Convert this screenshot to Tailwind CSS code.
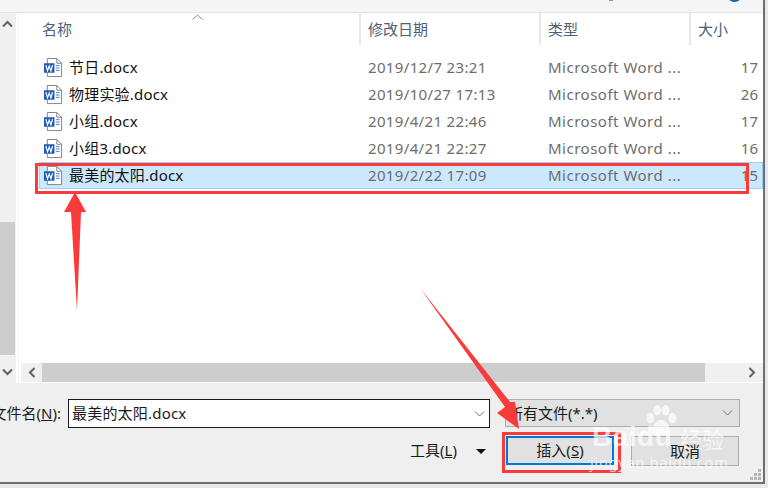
<!DOCTYPE html>
<html lang="zh-CN">
<head>
  <meta charset="UTF-8" />
  <title>插入文件</title>
  <script src="https://cdn.jsdelivr.net/npm/@tailwindcss/browser@4"></script>
</head>
<body class="w-[768px] h-[488px] overflow-hidden bg-[#e8e8e8] relative font-['Noto_Sans','Noto_Sans_CJK_SC',sans-serif] text-[15px]">
  <svg class="hidden">
    <symbol id="word" viewBox="0 0 20 21">
      <path d="M3.5 .5H13.500L18.500 5.500V19.500H3.500Z" fill="#fff" stroke="#7f7f7f" />
      <path d="M13.500 .5V5.500H18.500" fill="none" stroke="#7f7f7f" />
      <rect x="0" y="5.500" width="11" height="10" fill="#1f5bb8" />
      <path d="M12.500 8H16.500M12.500 10.500H16.500M12.500 13H16.500" stroke="#3f7fd0" />
      <path d="M2 7.500L3.700 13.500L5.500 8.500L7.300 13.500L9 7.500" fill="none" stroke="#fff" stroke-width="1.300" />
    </symbol>
  </svg>

  <div class="w-[765px] h-[484px] flex flex-col bg-[#efefef] border-r-2 border-b-2 border-[#6e6e6e]">
    <!-- top bar -->
    <div class="h-[13px] shrink-0 flex justify-end pr-[21px] overflow-hidden bg-[#f4f5f7] border-b border-[#e3e3e3]">
      <div class="w-[4px] h-[1px] bg-[#999] mr-[114px]"></div>
      <div class="w-[15px] h-[15px] -mt-[13px] rounded-full bg-[#0a63ad]"></div>
    </div>

    <!-- middle -->
    <div class="h-[370px] shrink-0 flex">
      <div class="w-[16px] flex flex-col items-center bg-[#f0f0f0]">
        <svg class="mt-[7px] ml-[-1px]" width="11" height="8" viewBox="0 0 11 8"><path d="M1 6.500L5.500 2L10 6.500" fill="none" stroke="#606060" stroke-width="2" /></svg>
        <div class="w-[15px] h-[133px] mt-[194px] mr-[1px] bg-[#cdcdcd]"></div>
        <svg class="mt-[13px] ml-[-1px]" width="11" height="8" viewBox="0 0 11 8"><path d="M1 1.500L5.500 6L10 1.500" fill="none" stroke="#606060" stroke-width="2" /></svg>
      </div>
      <div class="w-[3px] bg-white border-r border-[#f4f4f4]"></div>

      <div class="flex-1 flex flex-col bg-white min-w-0">
        <!-- header -->
        <div class="h-[32px] shrink-0 flex items-center text-[#4c607a] text-[15px] relative">
          <svg class="absolute left-[173px] top-[1px]" width="11" height="6" viewBox="0 0 11 6"><path d="M.5 5.500L5.500 1L10.500 5.500" fill="none" stroke="#8a8a8a" /></svg>
          <div class="w-[342px] h-full flex items-center pl-[23px] border-r-2 border-[#e8e8e8]">名称</div>
          <div class="w-[180px] h-full flex items-center pl-[7px] border-r-2 border-[#e8e8e8]">修改日期</div>
          <div class="w-[150px] h-full flex items-center pl-[7px] border-r-2 border-[#e8e8e8]">类型</div>
          <div class="flex-1 h-full flex items-center pl-[7px]">大小</div>
        </div>

        <!-- rows -->
        <div class="flex-1 pt-[9px] pl-[20px] text-[#6d6d6d]">
          <div class="h-[27px] flex items-center pl-[5px] pr-[5px]">
            <svg class="w-[19px] h-[20px] shrink-0" viewBox="0 0 20 21"><use href="#word" /></svg>
            <span class="w-[305px] pl-[6px] text-[#111] tracking-[.2px] whitespace-nowrap">节日.docx</span>
            <span class="w-[180px] tracking-[.35px]">2019/12/7 23:21</span>
            <span class="flex-1 tracking-[.5px] whitespace-nowrap">Microsoft Word ...</span>
            <span>17</span>
          </div>
          <div class="h-[27px] flex items-center pl-[5px] pr-[5px]">
            <svg class="w-[19px] h-[20px] shrink-0" viewBox="0 0 20 21"><use href="#word" /></svg>
            <span class="w-[305px] pl-[6px] text-[#111] tracking-[.2px] whitespace-nowrap">物理实验.docx</span>
            <span class="w-[180px] tracking-[.35px]">2019/10/27 17:13</span>
            <span class="flex-1 tracking-[.5px] whitespace-nowrap">Microsoft Word ...</span>
            <span>26</span>
          </div>
          <div class="h-[27px] flex items-center pl-[5px] pr-[5px]">
            <svg class="w-[19px] h-[20px] shrink-0" viewBox="0 0 20 21"><use href="#word" /></svg>
            <span class="w-[305px] pl-[6px] text-[#111] tracking-[.2px] whitespace-nowrap">小组.docx</span>
            <span class="w-[180px] tracking-[.35px]">2019/4/21 22:46</span>
            <span class="flex-1 tracking-[.5px] whitespace-nowrap">Microsoft Word ...</span>
            <span>17</span>
          </div>
          <div class="h-[27px] flex items-center pl-[5px] pr-[5px]">
            <svg class="w-[19px] h-[20px] shrink-0" viewBox="0 0 20 21"><use href="#word" /></svg>
            <span class="w-[305px] pl-[6px] text-[#111] tracking-[.2px] whitespace-nowrap">小组3.docx</span>
            <span class="w-[180px] tracking-[.35px]">2019/4/21 22:27</span>
            <span class="flex-1 tracking-[.5px] whitespace-nowrap">Microsoft Word ...</span>
            <span>16</span>
          </div>
          <div class="h-[27px] flex items-center pl-[4px] pr-[4px] bg-[#cce8ff] border border-[#99d1ff]">
            <svg class="w-[19px] h-[20px] shrink-0" viewBox="0 0 20 21"><use href="#word" /></svg>
            <span class="w-[305px] pl-[6px] text-[#111] tracking-[.2px] whitespace-nowrap">最美的太阳.docx</span>
            <span class="w-[180px] tracking-[.35px]">2019/2/22 17:09</span>
            <span class="flex-1 tracking-[.5px] whitespace-nowrap">Microsoft Word ...</span>
            <span>15</span>
          </div>
        </div>

        <!-- horizontal scrollbar -->
        <div class="h-[19px] shrink-0 ml-[2px] mb-[1px] flex items-center bg-[#f0f0f0]">
          <div class="w-[21px] flex justify-center">
            <svg width="8" height="11" viewBox="0 0 8 11"><path d="M6.500 1L2 5.500L6.500 10" fill="none" stroke="#606060" stroke-width="2" /></svg>
          </div>
          <div class="w-[663px] h-full bg-[#cdcdcd]"></div>
          <div class="flex-1 flex justify-end pr-[7px]">
            <svg width="8" height="11" viewBox="0 0 8 11"><path d="M1.500 1L6 5.500L1.500 10" fill="none" stroke="#606060" stroke-width="2" /></svg>
          </div>
        </div>
      </div>
    </div>

    <!-- bottom panel -->
    <div class="flex-1 bg-[#efefef] pt-[16px] text-[#1a1a1a] relative">
      <div class="flex items-start">
        <div class="w-[61px] h-[29px] flex items-center justify-end overflow-hidden whitespace-nowrap shrink-0">文件名(<span class="underline">N</span>):</div>
        <div class="ml-[7px] w-[422px] h-[29px] flex items-center justify-between pl-[3px] pr-[4px] bg-white border border-[#1a1a1a]">
          <span class="tracking-[.2px]">最美的太阳.docx</span>
          <svg width="11" height="6" viewBox="0 0 11 6"><path d="M1 .5L5.500 5L10 .5" fill="none" stroke="#707070" /></svg>
        </div>
        <div class="ml-[15px] w-[235px] h-[28px] flex items-center justify-between pl-[2px] pr-[6px] bg-[#e1e1e1] border border-[#adadad]">
          <span>所有文件(*.*)</span>
          <svg width="11" height="6" viewBox="0 0 11 6"><path d="M1 .5L5.500 5L10 .5" fill="none" stroke="#707070" /></svg>
        </div>
      </div>
      <div class="flex items-start mt-[8px]">
        <div class="ml-[410px] w-[66px] h-[29px] flex items-center whitespace-nowrap">工具(<span class="underline">L</span>)</div>
        <svg class="mt-[13px]" width="10" height="5" viewBox="0 0 10 5"><path d="M0 0H10L5 5Z" fill="#111" /></svg>
        <button class="ml-[20px] w-[108px] h-[29px] flex items-center justify-center bg-[#e1e1e1] border-2 border-[#0078d7]">插入(<span class="underline">S</span>)</button>
        <button class="ml-[17px] w-[108px] h-[30px] flex items-center justify-center bg-[#e1e1e1] border border-[#adadad]"><span class="relative z-10">取消</span></button>
      </div>
      <!-- resize grip -->
      <svg class="absolute right-[1px] bottom-[1px]" width="12" height="12" viewBox="0 0 12 12" fill="#b5b5b5"><rect x="8" y="0" width="3" height="3" /><rect x="4" y="4" width="3" height="3" /><rect x="8" y="4" width="3" height="3" /><rect x="0" y="8" width="3" height="3" /><rect x="4" y="8" width="3" height="3" /><rect x="8" y="8" width="3" height="3" /></svg>
    </div>
  </div>

  <!-- red marks drawn on top of the screenshot -->
  <div class="absolute left-[35px] top-[163px] w-[714px] h-[31px] border-[3px] border-[#f93b3b]"></div>
  <div class="absolute left-[502px] top-[432px] w-[119px] h-[41px] border-[3px] border-[#f93b3b]"></div>
  <svg class="absolute inset-0 pointer-events-none" width="768" height="488" viewBox="0 0 768 488">
    <path d="M75 192L86 212H81L77 311L71 212H64Z" fill="#f93b3b" />
    <path d="M420 288L510 402L515 402L519 429L497 413L505 407Z" fill="#f93b3b" />
  </svg>

  <!-- watermark -->
  <div class="absolute left-[590px] top-[400px] w-[140px] h-[76px] text-white/70 pointer-events-none">
    <svg class="absolute left-[55px] top-[5px]" width="32" height="33" viewBox="0 0 42 38" preserveAspectRatio="none" fill="#ffffff" fill-opacity=".7">
      <ellipse cx="7" cy="15" rx="5" ry="6" /><ellipse cx="16" cy="6" rx="5" ry="6" /><ellipse cx="27" cy="6" rx="5" ry="6" /><ellipse cx="36" cy="15" rx="5" ry="6" />
      <path d="M21 17C28 17 33 25 33 30C33 36 26 35 21 34C16 35 9 36 9 30C9 25 14 17 21 17Z" />
    </svg>
    <span class="absolute left-[2px] top-[23px] text-[28px] leading-[28px] tracking-[.5px] font-bold font-['Liberation_Sans',sans-serif]">Baidu</span>
    <span class="absolute left-[90px] top-[27px] text-[22px] leading-[22px] font-['Noto_Sans_CJK_SC',sans-serif]">经验</span>
    <span class="absolute left-0 top-[53px] text-[15px] leading-[18px] tracking-[.5px] whitespace-nowrap">jingyan.baidu.com</span>
  </div>
</body>
</html>
